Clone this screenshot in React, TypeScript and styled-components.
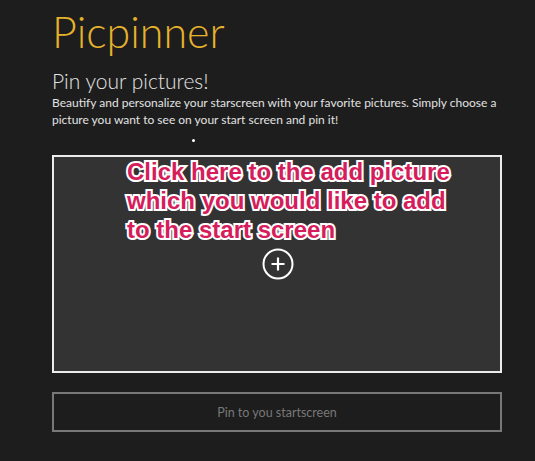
import React from 'react';
import styled, {createGlobalStyle} from 'styled-components';

const colors = {
  bg: '#1d1d1d',
  panel: '#333333',
  gold: '#e6b22c',
  text: '#e2e2e2',
  muted: '#787878',
  pink: '#d61d5b',
};

const GlobalStyle = createGlobalStyle`
  html, body {
    margin: 0;
    padding: 0;
    background: ${colors.bg};
  }
  body {
    font-family: Lato, 'Open Sans', sans-serif;
  }
`;

const Page = styled.div`
  width: 535px;
  height: 461px;
  box-sizing: border-box;
  padding: 10px 33px 0 52px;
  background: ${colors.bg};
  overflow: hidden;
`;

const Title = styled.h1`
  margin: 0;
  font-size: 43px;
  line-height: 1;
  font-weight: 300;
  color: ${colors.gold};
`;

const Subtitle = styled.h2`
  margin: 17px 0 0;
  font-size: 21px;
  line-height: 1;
  font-weight: 300;
  color: ${colors.text};
`;

const Intro = styled.p`
  margin: 3px 0 0;
  font-size: 12px;
  line-height: 17px;
  color: ${colors.text};
  white-space: nowrap;
`;

const Dot = styled.div`
  width: 3px;
  height: 3px;
  border-radius: 50%;
  background: #fff;
  margin: 11px 0 13px 140px;
`;

const DropZone = styled.div`
  height: 218px;
  box-sizing: border-box;
  border: 2px solid #ececec;
  background: ${colors.panel};
  display: flex;
  flex-direction: column;
  align-items: center;
`;

const Caption = styled.div`
  align-self: flex-start;
  margin-left: 73px;
  font-family: 'Liberation Sans', Arial, sans-serif;
  font-weight: bold;
  font-size: 24px;
  line-height: 29px;
  color: ${colors.pink};
  -webkit-text-stroke: 4px #fff;
  paint-order: stroke fill;
`;

const AddIcon = styled.svg`
  margin-top: 4px;
  margin-left: 2px;
`;

const PinButton = styled.button`
  display: block;
  width: 100%;
  height: 40px;
  margin-top: 19px;
  background: transparent;
  border: 2px solid ${colors.muted};
  color: ${colors.muted};
  font-family: Lato, 'Open Sans', sans-serif;
  font-size: 12.5px;
  cursor: pointer;
`;

export default function App() {
  return (
    <Page>
      <GlobalStyle />
      <Title>Picpinner</Title>
      <Subtitle>Pin your pictures!</Subtitle>
      <Intro>
        Beautify and personalize your starscreen with your favorite pictures. Simply choose a
        <br />
        picture you want to see on your start screen and pin it!
      </Intro>
      <Dot />
      <DropZone>
        <Caption>
          Click here to the add picture
          <br />
          which you would like to add
          <br />
          to the start screen
        </Caption>
        <AddIcon width="32" height="32" viewBox="0 0 32 32">
          <circle cx="16" cy="16" r="14.5" fill="none" stroke="#fff" strokeWidth="2" />
          <path d="M16 9.5v13M9.5 16h13" stroke="#fff" strokeWidth="2.2" />
        </AddIcon>
      </DropZone>
      <PinButton>Pin to you startscreen</PinButton>
    </Page>
  );
}
